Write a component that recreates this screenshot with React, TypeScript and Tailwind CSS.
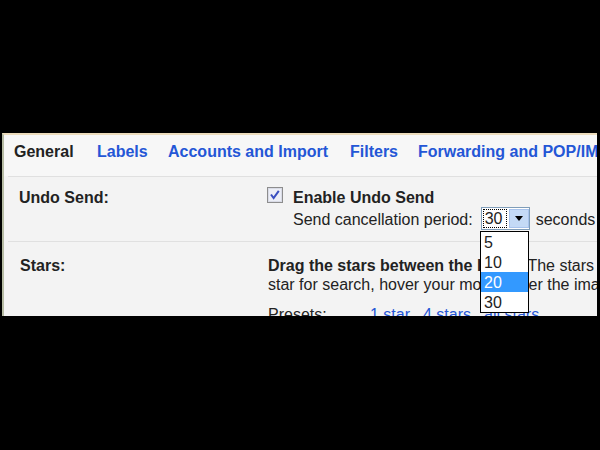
import React from "react";

function Checkbox() {
  return (
    <svg width="16" height="16" viewBox="0 0 16 16" className="shrink-0">
      <rect x="0.5" y="0.5" width="15" height="15" fill="#e4e6ee" stroke="#8d8d8d" />
      <rect x="1.5" y="1.5" width="13" height="13" fill="#eceef6" stroke="#d9dbe6" />
      <path d="M4 7.5 L6.6 11 L11.8 3.8" fill="none" stroke="#3a4fc0" strokeWidth="2" />
    </svg>
  );
}

function SelectBox() {
  return (
    <div className="flex h-[23px] w-[49px] border border-[#7f9db9] bg-white">
      <div className="m-[1px] flex w-[24px] items-center border border-dotted border-black pl-[1px] leading-[18px]">
        30
      </div>
      <div className="ml-[1px] my-[1px] flex w-[20px] items-center justify-center border border-[#a8c3ec] bg-[#c4daf6]">
        <svg width="8" height="5" viewBox="0 0 8 5">
          <path d="M0 0 H8 L4 5 Z" fill="#000" />
        </svg>
      </div>
    </div>
  );
}

export default function App() {
  const tabs = [
    { label: "General", w: "w-[83px]", active: true },
    { label: "Labels", w: "w-[71px]", active: false },
    { label: "Accounts and Import", w: "w-[182px]", active: false },
    { label: "Filters", w: "w-[68px]", active: false },
    { label: "Forwarding and POP/IMAP", w: "w-[200px]", active: false },
  ];
  return (
    <div className="h-[450px] w-[600px] overflow-hidden bg-black pl-[2px] pr-[3px] pt-[133px]">
      <div className="relative h-[183px] overflow-hidden border-l-2 border-t-2 border-l-[#b7bca4] border-t-[#ecdcbc] bg-[#f3f3f3] font-['Liberation_Sans',Arial,sans-serif] text-[16px] text-[#222]">
        {/* Tabs */}
        <div className="flex h-[41px] whitespace-nowrap bg-[#f7f7f7] pl-[10px] pt-[8px] leading-[18px]">
          {tabs.map((t) => (
            <div
              key={t.label}
              className={
                t.w +
                " shrink-0 font-bold " +
                (t.active ? "text-[#222]" : "text-[#2456d6]")
              }
            >
              {t.label}
            </div>
          ))}
        </div>
        <div className="ml-[4px] h-px bg-[#e0e0e0]" />

        {/* Undo Send row */}
        <div className="flex h-[64px]">
          <div className="w-[264px] shrink-0 pl-[15px] pt-[12px] font-bold leading-[18px]">
            Undo Send:
          </div>
          <div className="flex flex-col pt-[12px]">
            <div className="flex h-[18px] items-start leading-[18px]">
              <div className="-mt-[2px] ml-[-1px]">
                <Checkbox />
              </div>
              <span className="ml-[10px] font-bold">Enable Undo Send</span>
            </div>
            <div className="flex items-start whitespace-nowrap pl-[25px]">
              <span className="mr-[8px] mt-[4px] leading-[18px]">Send cancellation period:</span>
              <SelectBox />
              <span className="ml-[6px] mt-[4px] leading-[18px]">seconds</span>
            </div>
          </div>
        </div>
        <div className="ml-[4px] h-px bg-[#e0e0e0]" />

        {/* Stars row */}
        <div className="flex">
          <div className="w-[264px] shrink-0 pl-[16px] pt-[14px] font-bold leading-[19px]">
            Stars:
          </div>
          <div className="flex flex-col whitespace-nowrap pt-[14px] leading-[19px]">
            <div>
              <span className="font-bold">Drag the stars between the lists.</span>
              <span className="ml-[14px]">
                The stars will rotate in the order shown below when you click successively.
              </span>
            </div>
            <div>star for search, hover your mouse over the image.</div>
            <div className="mt-[11px] flex">
              <span className="w-[102px]">Presets:</span>
              <span className="text-[#2456d6]">1 star</span>
              <span className="ml-[13px] text-[#2456d6]">4 stars</span>
              <span className="ml-[13px] text-[#2456d6]">all stars</span>
            </div>
          </div>
        </div>

        {/* Dropdown list */}
        <div className="absolute left-[476px] top-[96px] flex h-[82px] w-[49px] flex-col border border-black bg-white leading-[20px]">
          <div className="h-[20px] pl-[3px] pt-[1px]">5</div>
          <div className="h-[20px] pl-[3px] pt-[1px]">10</div>
          <div className="h-[20px] bg-[#3399ff] pl-[3px] pt-[1px] text-white">20</div>
          <div className="h-[20px] pl-[3px] pt-[1px]">30</div>
        </div>
      </div>
    </div>
  );
}
